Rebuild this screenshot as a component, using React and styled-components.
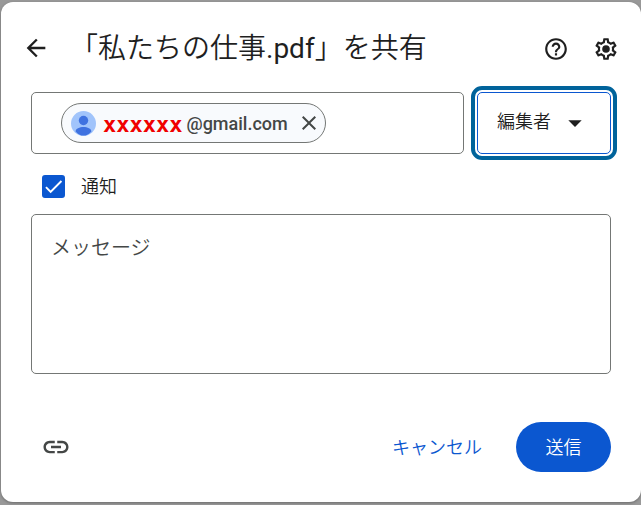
import React, { useState } from "react";
import styled, { createGlobalStyle } from "styled-components";
import { MdArrowBack, MdArrowDropDown, MdCheck, MdClose, MdHelpOutline, MdLink } from "react-icons/md";

const App = () => {
  const [role, setRole] = useState("editor");
  const [notify, setNotify] = useState(true);
  const [message, setMessage] = useState("");

  return (
    <>
      <GlobalStyle />
      <Dialog role="dialog" aria-labelledby="share-title">
        <Header>
          <IconButton aria-label="戻る">
            <MdArrowBack size={28} />
          </IconButton>
          <Title id="share-title">
            「私たちの仕事<Extension>.pdf</Extension>」を共有
          </Title>
          <HeaderActions>
            <IconButton aria-label="ヘルプ">
              <MdHelpOutline size={26} />
            </IconButton>
            <IconButton aria-label="設定">
              <GearIcon />
            </IconButton>
          </HeaderActions>
        </Header>

        <InviteRow>
          <PeopleField>
            <Chip>
              <Avatar />
              <Address>
                <Masked>xxxxxx</Masked>@gmail.com
              </Address>
              <ChipRemove aria-label="削除">
                <MdClose size={24} />
              </ChipRemove>
            </Chip>
          </PeopleField>
          <RoleField>
            <RoleSelect aria-label="権限" value={role} onChange={(e) => setRole(e.target.value)}>
              <option value="editor">編集者</option>
              <option value="viewer">閲覧者</option>
            </RoleSelect>
            <MdArrowDropDown size={32} />
          </RoleField>
        </InviteRow>

        <NotifyLabel>
          <CheckSlot>
            <Checkbox type="checkbox" checked={notify} onChange={(e) => setNotify(e.target.checked)} />
            {notify && <MdCheck size={23} stroke="currentColor" />}
          </CheckSlot>
          <span>通知</span>
        </NotifyLabel>

        <Message
          aria-label="メッセージ"
          placeholder="メッセージ"
          value={message}
          onChange={(e) => setMessage(e.target.value)}
        />

        <Footer>
          <IconButton aria-label="リンクをコピー" $muted>
            <MdLink size={30} />
          </IconButton>
          <FooterActions>
            <TextButton>キャンセル</TextButton>
            <SendButton>送信</SendButton>
          </FooterActions>
        </Footer>
      </Dialog>
    </>
  );
};

const Avatar = () => (
  <svg width="25" height="25" viewBox="0 0 25 25" aria-hidden="true">
    <circle cx="12.5" cy="12.5" r="12.5" fill="#a1c4fb" />
    <circle cx="12.5" cy="9.5" r="4.7" fill="#3f72e0" />
    <path d="M4.600 20.400c0-3 4-4.500 7.900-4.500s7.900 1.500 7.900 4.500c-2 2.600-4.800 4.200-7.900 4.200s-5.900-1.600-7.900-4.200z" fill="#3f72e0" />
  </svg>
);

const GearIcon = () => (
  <svg width="26" height="26" viewBox="0 0 24 24" fill="currentColor" aria-hidden="true">
    <path d="M19.43 12.98c.04-.32.07-.64.07-.98s-.03-.66-.07-.98l2.11-1.65c.19-.15.24-.42.12-.64l-2-3.460a.5.5 0 0 0-.61-.22l-2.490 1c-.52-.4-1.080-.73-1.690-.98l-.38-2.650A.49.49 0 0 0 14 2h-4c-.25 0-.46.18-.49.42l-.38 2.650c-.61.25-1.170.59-1.690.98l-2.490-1a.5.5 0 0 0-.61.22l-2 3.460c-.13.22-.07.49.12.64l2.110 1.650c-.04.32-.07.65-.07.98s.03.66.07.98l-2.110 1.650c-.19.15-.24.42-.12.64l2 3.460c.12.22.39.3.61.22l2.490-1c.52.4 1.080.73 1.690.98l.38 2.650c.03.24.24.42.49.42h4c.25 0 .46-.18.49-.42l.38-2.650c.61-.25 1.170-.59 1.690-.98l2.490 1c.23.09.49 0 .61-.22l2-3.460c.12-.22.07-.49-.12-.64l-2.110-1.650zm-1.980-1.710c.04.31.05.52.05.73s-.02.43-.05.73l-.14 1.130.89.7 1.080.84-.7 1.210-1.270-.51-1.040-.42-.9.68c-.43.32-.84.56-1.250.73l-1.060.43-.16 1.130-.2 1.350h-1.400l-.19-1.350-.16-1.130-1.060-.43c-.43-.18-.83-.41-1.230-.71l-.91-.7-1.060.43-1.270.51-.7-1.210 1.080-.84.89-.7-.14-1.130c-.03-.31-.05-.54-.05-.74s.02-.43.05-.73l.14-1.130-.89-.7-1.080-.84.7-1.210 1.270.51 1.040.42.9-.68c.43-.32.84-.56 1.250-.73l1.060-.43.16-1.130.2-1.350h1.390l.19 1.350.16 1.130 1.060.43c.43.18.83.41 1.230.71l.91.7 1.060-.43 1.270-.51.7 1.210-1.070.85-.89.7.14 1.130z" />
    <circle cx="12" cy="12" r="3.500" />
  </svg>
);

export default App;

const GlobalStyle = createGlobalStyle`
  *, *::before, *::after {
    box-sizing: border-box;
  }
  body {
    margin: 0;
    background: #999;
    color: #1f1f1f;
    font-family: "Noto Sans", "Noto Sans CJK JP", sans-serif;
    font-size: 18px;
    font-weight: 350;
  }
  button, select, textarea {
    font: inherit;
    color: inherit;
  }
`;

const Dialog = styled.main`
  margin: 2px 0 3px 1px;
  min-height: calc(100vh - 5px);
  padding: 24px 30px 30px;
  display: flex;
  flex-direction: column;
  background: #fff;
  border-radius: 12px;
  box-shadow: 0 1px 3px rgba(0, 0, 0, 0.3);
`;

const Header = styled.header`
  display: flex;
  align-items: center;
  height: 44px;
  margin: 0 -8px 0 -9px;
`;

const Title = styled.h1`
  flex: 1;
  margin: 0 0 0 20px;
  font-size: 28px;
  line-height: 44px;
  font-weight: 350;
  white-space: nowrap;
`;

const Extension = styled.span`
  font-family: Roboto, sans-serif;
  font-weight: 400;
`;

const HeaderActions = styled.div`
  display: flex;
  gap: 24px;
  padding-top: 2px;
`;

const IconButton = styled.button`
  display: flex;
  padding: 0;
  border: 0;
  background: none;
  color: ${(props) => (props.$muted ? "#444746" : "#1f1f1f")};
  cursor: pointer;
`;

const InviteRow = styled.div`
  display: flex;
  gap: 13px;
  margin-top: 22px;
`;

const PeopleField = styled.div`
  flex: 1;
  display: flex;
  align-items: center;
  height: 62px;
  padding: 0 29px;
  border: 1px solid #747775;
  border-radius: 5px;
`;

const Chip = styled.div`
  display: flex;
  align-items: center;
  height: 40px;
  padding: 0 4px 0 9px;
  border: 1px solid #747775;
  border-radius: 20px;
  background: #f8fafd;
`;

const Address = styled.span`
  display: flex;
  align-items: center;
  gap: 4px;
  margin: 0 9px 0 7px;
  color: #444746;
  font-family: Roboto, sans-serif;
  font-weight: 500;
`;

const Masked = styled.span`
  padding-top: 2px;
  color: #f00000;
  font-family: "DejaVu Sans Mono", monospace;
  font-size: 22px;
  font-weight: 700;
`;

const ChipRemove = styled(IconButton)`
  color: #444746;
`;

const RoleField = styled.div`
  display: grid;
  align-items: center;
  width: 134px;
  height: 62px;
  border: 1px solid #0b57d0;
  border-radius: 5px;
  outline: 4px solid #00639b;
  outline-offset: 2px;

  > * {
    grid-area: 1 / 1;
  }
  svg {
    justify-self: end;
    margin-right: 19px;
    pointer-events: none;
  }
`;

const RoleSelect = styled.select`
  width: 100%;
  height: 100%;
  padding: 0 48px 4px 19px;
  border: 0;
  outline: 0;
  background: none;
  appearance: none;
`;

const NotifyLabel = styled.label`
  display: flex;
  align-items: center;
  align-self: flex-start;
  gap: 16px;
  height: 24px;
  margin: 20px 0 16px 11px;

  > span:last-child {
    padding-bottom: 2px;
  }
`;

const CheckSlot = styled.span`
  display: grid;
  place-items: center;
  color: #fff;

  > * {
    grid-area: 1 / 1;
  }
  svg {
    pointer-events: none;
  }
`;

const Checkbox = styled.input`
  width: 23px;
  height: 23px;
  margin: 0;
  appearance: none;
  border: 2px solid #444746;
  border-radius: 3px;

  &:checked {
    border-color: #0b57d0;
    background: #0b57d0;
  }
`;

const Message = styled.textarea`
  display: block;
  width: 100%;
  height: 160px;
  padding: 18px 19px;
  border: 1px solid #747775;
  border-radius: 5px;
  font-size: 20px;
  line-height: 30px;
  resize: none;

  &::placeholder {
    color: #444746;
    opacity: 1;
  }
`;

const Footer = styled.footer`
  display: flex;
  align-items: center;
  justify-content: space-between;
  margin-top: auto;
  padding-left: 10px;
`;

const FooterActions = styled.div`
  display: flex;
  gap: 10px;
`;

const TextButton = styled.button`
  height: 50px;
  padding: 0 24px 3px;
  border: 0;
  border-radius: 25px;
  background: none;
  color: #0b57d0;
  cursor: pointer;
`;

const SendButton = styled(TextButton)`
  min-width: 95px;
  background: #0b57d0;
  color: #fff;
`;
